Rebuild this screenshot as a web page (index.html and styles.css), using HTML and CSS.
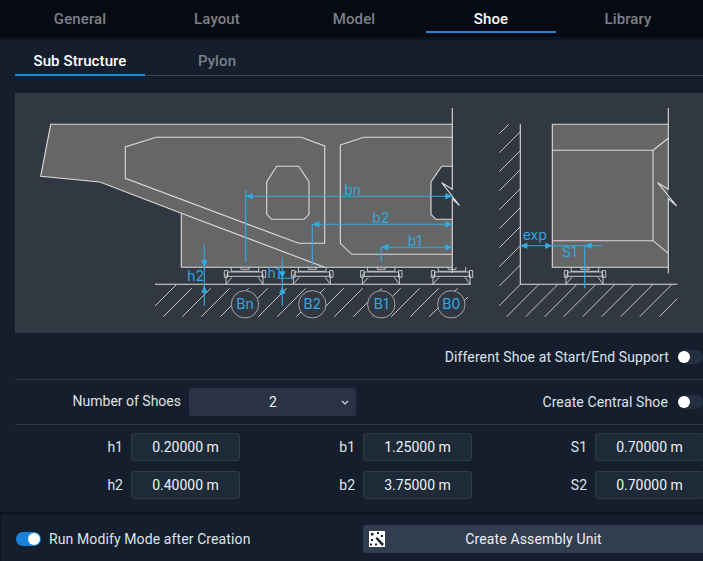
FILE: index.html
```html
<!DOCTYPE html>
<html lang="en">
<head>
<meta charset="utf-8">
<title>Shoe</title>
<link rel="stylesheet" href="styles.css">
</head>
<body>
<div class="app">
  <nav class="tabs main-tabs">
    <div class="tab">General</div>
    <div class="tab">Layout</div>
    <div class="tab">Model</div>
    <div class="tab active">Shoe</div>
    <div class="tab">Library</div>
  </nav>
  <nav class="tabs sub-tabs">
    <div class="tab active">Sub Structure</div>
    <div class="tab">Pylon</div>
  </nav>
  <section class="diagram">
    <svg class="drawing" viewBox="15 93 689 240" width="689" height="240" xmlns="http://www.w3.org/2000/svg">
      <defs>
        <g id="shoe" class="thin">
          <path d="M-13.7 0V4H13.7V0M-4 0V2H4V0"/>
          <path d="M-20.7 3.3H-17.3V10H-20.7ZM17.3 3.3H20.7V10H17.3Z"/>
          <path d="M-17.3 4.7H17.3V9H-17.3Z"/>
          <path d="M-19 7V16.7M18 7V16.7M-19 16.7L-13 10M18 16.7L13 10"/>
        </g>
        <path id="head" d="M0 0L-7 -3.2V3.2Z"/>
      </defs>
      <path class="mass" d="M50.7 124.3H452.3V267.3H181.3V213.3L100 182L40.7 176.3Z"/>
      <path class="hole" d="M452.3 166.3H441.7L431 182V214.3L436 219.3H452.3Z"/>
      <g class="line">
        <path d="M181.3 213.3V267.3H452.3M181.3 213.3L100 182L40.7 176.3L50.7 124.3H452.3"/>
        <path d="M181.3 213.3L324.7 267.3"/>
        <path d="M156 137.3L125.3 147V178.3L298.7 243.3H324.7V146L301.3 137.3Z"/>
        <path d="M276.7 166.3H298.7L309 182V214.3L304 219.3H271.7L266.7 214.3V182Z"/>
        <path d="M340.3 145L363.7 137.3H452.3M340.3 145V243.3L351.7 254.3H452.3"/>
        <path d="M452.3 166.3H441.7L431 182V214.3L436 219.3H452.3"/>
        <path d="M452.3 108V189.3L441.7 182.7L459.5 205.5L452.3 198.5V273"/>
        <path d="M155 284.3H470.7"/>
      </g>
      <g class="thin">
        <path d="M155 306L176 285M163.3 316.7L191.7 288.3M182.3 316.7L210.7 288.3M201.3 316.7L229.7 288.3M220.3 316.7L248.7 288.3M239.3 316.7L267.7 288.3M258.3 316.7L286.7 288.3M277.3 316.7L305.7 288.3M296.3 316.7L324.7 288.3M315.3 316.7L343.7 288.3M334.3 316.7L362.7 288.3M353.3 316.7L381.7 288.3M372.3 316.7L400.7 288.3M391.3 316.7L419.7 288.3M410.3 316.7L438.7 288.3M429.3 316.7L457.7 288.3M448.3 316.7L468 297"/>
      </g>
      <g class="bubble">
        <circle cx="245" cy="304.3" r="13.7"/>
        <circle cx="312.3" cy="304.3" r="13.7"/>
        <circle cx="381.3" cy="304.3" r="13.7"/>
        <circle cx="451.3" cy="304.3" r="13.7"/>
      </g>
      <use href="#shoe" x="245" y="267.3"/>
      <use href="#shoe" x="312.3" y="267.3"/>
      <use href="#shoe" x="381.3" y="267.3"/>
      <use href="#shoe" x="452" y="267.3"/>
      <path class="mass" d="M552.3 124.3H668.3V267.3H552.3Z"/>
      <g class="line">
        <path d="M552.3 124.3H668.3M552.3 124.3V267.3H668.3"/>
        <path d="M552.3 150.3H653V240.7H552.3M653 150.3L668.3 138.3M653 240.7L668.3 253.3"/>
        <path d="M668.3 108V189.3L657.7 182.7L676.7 206L668.3 198.5V273.3"/>
        <path d="M520.3 124.3V284.3H677.3"/>
      </g>
      <g class="thin">
        <path d="M499.3 133.7L508.7 124.3M499.3 152.7L520.3 131.7M499.3 171.7L520.3 150.7M499.3 190.7L520.3 169.7M499.3 209.7L520.3 188.7M499.3 228.7L520.3 207.7M499.3 247.7L520.3 226.7M499.3 266.7L520.3 245.7M499.3 286L520.3 265"/>
        <path d="M499.3 305.7L520.3 284.3M506.7 316.7L538.3 285M525.7 316.7L557.3 285M544.7 316.7L576.3 285M563.7 316.7L595.3 285M582.7 316.7L614.3 285M601.7 316.7L633.3 285M620.7 316.7L652.3 285M639.7 316.7L671.3 285M659.3 316.7L677.3 298.5"/>
      </g>
      <use href="#shoe" x="585" y="267.3"/>
      <g class="dim">
        <path d="M245.7 190V261.7M245.7 196.3H452.3"/>
        <path d="M312.3 224.3V265M312.3 224.3H452.3"/>
        <path d="M381.3 245.7V261.7M381.3 247.3H452.3"/>
        <path d="M204.3 245V305.7"/>
        <path d="M282.3 257.3V305.7M277.3 278.3H293.3"/>
        <path d="M520.3 245.7H601.7M584.7 245.7V288.3"/>
      </g>
      <g class="arrow">
        <use href="#head" transform="translate(245.7 196.3) rotate(180)"/>
        <use href="#head" transform="translate(452.3 196.3)"/>
        <use href="#head" transform="translate(312.3 224.3) rotate(180)"/>
        <use href="#head" transform="translate(452.3 224.3)"/>
        <use href="#head" transform="translate(381.3 247.3) rotate(180)"/>
        <use href="#head" transform="translate(452.3 247.3)"/>
        <use href="#head" transform="translate(204.3 267.3) rotate(90)"/>
        <use href="#head" transform="translate(204.3 285.7) rotate(-90)"/>
        <use href="#head" transform="translate(282.3 278.3) rotate(90)"/>
        <use href="#head" transform="translate(282.3 286.7) rotate(-90)"/>
        <use href="#head" transform="translate(520.3 245.7) rotate(180)"/>
        <use href="#head" transform="translate(552.3 245.7)"/>
        <use href="#head" transform="translate(584.7 245.7) rotate(180)"/>
      </g>
      <g class="dim-text">
        <text x="352.7" y="195">bn</text>
        <text x="380.7" y="223">b2</text>
        <text x="414.7" y="245.5">b1</text>
        <text x="195.7" y="281">h2</text>
        <text x="274.3" y="277.5">h1</text>
        <text x="534.7" y="240">exp</text>
        <text x="569.3" y="256.5">S1</text>
        <text x="245" y="309">Bn</text>
        <text x="312.3" y="309">B2</text>
        <text x="381.3" y="309">B1</text>
        <text x="451.3" y="309">B0</text>
      </g>
    </svg>
  </section>
  <div class="row row-option">
    <span class="label spaced">Different Shoe at Start/End Support</span>
    <span class="toggle"></span>
  </div>
  <div class="row row-halves">
    <div class="half">
      <span class="label label-wide">Number of Shoes</span>
      <div class="select">
        <span class="select-value">2</span>
        <svg class="chevron" viewBox="0 0 8 5" width="8" height="5" xmlns="http://www.w3.org/2000/svg"><path d="M1 1L4 4L7 1"/></svg>
      </div>
    </div>
    <div class="half half-end">
      <span class="label spaced">Create Central Shoe</span>
      <span class="toggle"></span>
    </div>
  </div>
  <div class="params">
    <div class="param"><span class="label">h1</span><div class="input">0.20000 m</div></div>
    <div class="param"><span class="label">b1</span><div class="input">1.25000 m</div></div>
    <div class="param"><span class="label">S1</span><div class="input">0.70000 m</div></div>
    <div class="param"><span class="label">h2</span><div class="input">0.40000 m</div></div>
    <div class="param"><span class="label">b2</span><div class="input">3.75000 m</div></div>
    <div class="param"><span class="label">S2</span><div class="input">0.70000 m</div></div>
  </div>
  <footer class="footer">
    <div class="run">
      <span class="toggle on"></span>
      <span class="label spaced">Run Modify Mode after Creation</span>
    </div>
    <div class="button">
      <svg class="wand" viewBox="0 0 16 16" width="16" height="16" xmlns="http://www.w3.org/2000/svg">
        <rect width="16" height="16" fill="#fff"/>
        <path d="M6.5 7.5L8 6L15 13L13 15Z" fill="#1a2230"/>
        <path d="M2 2h2.500v2.500H2zM8 1h2v2H8zM12 4h2v2h-2zM2 8h2v2H2zM1 12.500h2v2H1zM6 12.500h2v2H6z" fill="#1a2230"/>
      </svg>
      <span>Create Assembly Unit</span>
    </div>
  </footer>
</div>
</body>
</html>
```
FILE: styles.css
```css
* { box-sizing: border-box; }
html, body { margin: 0; padding: 0; height: 100%; overflow: hidden; background: #141e2c; }
body { font-family: Roboto, "Liberation Sans", sans-serif; font-size: 14px; color: #dfe3e8; }
.app { width: 703px; height: 561px; overflow: hidden; display: flex; flex-direction: column; }

.tabs { display: flex; gap: 7px; flex: none; }
.tab { width: 130px; text-align: center; color: #7b8087; font-size: 15px; font-weight: 500; letter-spacing: 0.1px; }
.tab.active { color: #fff; }
.main-tabs { height: 40px; padding-left: 15px; background: #050a13; border-bottom: 3px solid #0d1520; }
.main-tabs .tab { height: 33px; padding-top: 10px; line-height: 18px; }
.main-tabs .tab.active { border-bottom: 2px solid #1a86dc; }
.sub-tabs { height: 36px; margin-left: 15px; border-bottom: 1px solid #39424f; }
.sub-tabs .tab { height: 36px; padding-top: 12px; line-height: 18px; }
.sub-tabs .tab.active { border-bottom: 2px solid #1a86dc; }

.diagram { flex: none; height: 240px; width: 689px; margin: 17px 0 0 15px; background: #323842; }
.drawing { display: block; }
.mass { fill: #666666; }
.hole { fill: #323842; }
.line { fill: none; stroke: #dcdcdc; stroke-width: 1.1; }
.thin { fill: none; stroke: #d4d4d4; stroke-width: 0.9; }
.bubble { fill: #323842; stroke: #a4a4a4; stroke-width: 1; }
.dim { fill: none; stroke: #30ade6; stroke-width: 1.1; }
.arrow { fill: #30ade6; }
.dim-text { fill: #34a8e0; font-family: Inter, sans-serif; font-size: 14px; font-weight: 400; text-anchor: middle; }

.label { line-height: 18px; white-space: nowrap; text-align: right; }
.spaced { letter-spacing: 0.11px; }
.row { flex: none; display: flex; margin-left: 15px; border-bottom: 1px solid #2c3644; }
.row-option { height: 47px; width: 688px; padding-top: 15px; justify-content: flex-end; gap: 9px; align-items: flex-start; }
.row-halves { height: 45px; width: 688px; gap: 7px; padding-top: 8px; }
.half { width: 341px; flex: none; display: flex; gap: 8px; align-items: flex-start; height: 28px; }
.half .label { padding-top: 4px; }
.half-end .label { padding-top: 5px; }
.label-wide { width: 166px; }
.half-end { justify-content: flex-end; gap: 10px; width: 340px; }
.half-end .toggle { margin-top: 7px; }
.row-option .toggle { margin-top: 2px; }

.select { width: 167px; height: 28px; flex: none; background: #2a3344; border-radius: 3px; display: flex; align-items: center; padding: 0 7px 0 0; }
.select-value { flex: 1; text-align: center; padding-left: 16px; font-size: 14px; color: #eef0f3; }
.chevron { fill: none; stroke: #d5d9df; stroke-width: 1.2; }

.toggle { flex: none; width: 25px; height: 14px; border-radius: 7px; background: #242f3f; position: relative; display: block; }
.toggle::after { content: ""; position: absolute; left: 0; top: 1px; width: 12px; height: 12px; border-radius: 50%; background: #fff; }
.toggle.on { background: #1a82d8; }
.toggle.on::after { left: 12px; }

.params { flex: none; height: 87px; margin-left: 15px; width: 689px; padding-top: 8px; display: grid; grid-template-columns: repeat(3, 225px); column-gap: 7px; row-gap: 10px; align-content: start; }
.param { display: flex; gap: 8px; align-items: center; height: 28px; }
.param .label { width: 108px; }
.input { width: 109px; height: 28px; flex: none; background: #1f2a38; border: 1px solid #2f3a4a; border-radius: 3px; text-align: center; line-height: 26px; color: #eef0f3; }

.footer { flex: 1; display: flex; gap: 7px; padding: 10px 0 0 15px; width: 704px; border-top: 3px solid #0d1520; border-left: 1px solid #0d1520; }
.run { width: 340px; flex: none; display: flex; gap: 8px; align-items: flex-start; padding-top: 5px; }
.run .toggle { margin-top: 2px; }
.button { width: 341px; height: 28px; flex: none; background: #333d50; border-radius: 3px; display: flex; align-items: center; color: #eef0f3; position: relative; justify-content: center; letter-spacing: 0.15px; }
.wand { position: absolute; left: 6px; top: 6px; }
```
